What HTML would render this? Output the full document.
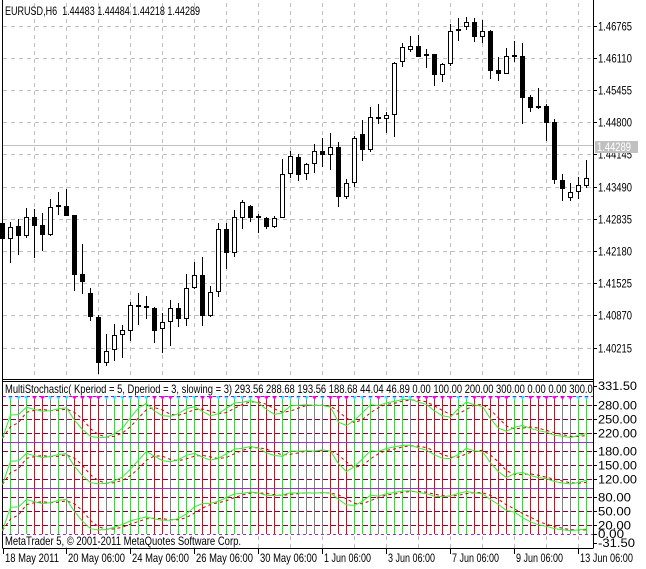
<!DOCTYPE html><html><head><meta charset="utf-8"><style>
html,body{margin:0;padding:0;background:#fff;width:646px;height:569px;overflow:hidden}
svg{display:block}
text{font-family:"Liberation Sans",sans-serif;font-size:12px;fill:#000}
</style></head><body>
<svg id="s" width="646" height="569" xmlns="http://www.w3.org/2000/svg"></svg>
<script>
var d=[[223,239,220,240],[239,227,222,263],[226,236,219,255],[236,217,208,238],[217,226,209,258],[225,235,213,251],[235,207,199,236],[207,205,192,215],[206,216,189,216],[215,275,215,291],[274,282,244,294],[293,317,288,321],[317,363,315,374],[363,351,334,366],[350,335,324,361],[335,330,325,358],[331,305,302,341],[305,306,293,325],[306,308,296,319],[308,331,307,343],[329,322,313,353],[322,308,300,346],[308,319,303,327],[319,288,274,326],[288,275,262,289],[275,316,257,326],[316,292,286,317],[292,229,223,297],[229,253,223,269],[253,217,210,257],[218,202,200,229],[206,218,205,222],[216,218,214,233],[218,227,217,229],[227,218,216,228],[218,174,159,218],[174,156,151,178],[157,175,154,181],[174,164,163,180],[164,151,144,173],[151,155,138,167],[155,147,133,170],[147,197,142,207],[197,183,179,199],[183,138,136,187],[134,150,120,161],[150,117,107,152],[117,119,104,124],[119,115,112,133],[115,63,62,137],[62,47,43,67],[50,46,36,52],[46,57,35,57],[56,54,49,68],[54,75,54,86],[75,64,63,82],[64,31,24,66],[31,29,18,41],[27,22,17,30],[22,37,18,42],[37,31,20,43],[31,71,30,79],[70,74,57,81],[74,56,48,74],[55,56,41,62],[56,98,43,124],[97,108,95,112],[106,107,88,109],[106,123,104,141],[122,180,119,184],[180,189,174,201],[198,192,183,201],[192,185,177,199],[186,178,160,188]];
var o='';
function L(x1,y1,x2,y2,c,da,w){o+='<line x1="'+x1+'" y1="'+y1+'" x2="'+x2+'" y2="'+y2+'" stroke="'+c+'"'+(da?' stroke-dasharray="'+da+'"':'')+(w?' stroke-width="'+w+'"':'')+'/>';}
function T(x,y,t,f,tl){o+='<text x="'+x+'" y="'+y+'"'+(f?' style="fill:'+f+'"':'')+(tl?' textLength="'+tl+'" lengthAdjust="spacingAndGlyphs"':'')+'>'+t+'</text>';}
var labs=['1.46765','1.46110','1.45455','1.44800','1.44145','1.43490','1.42835','1.42180','1.41525','1.40870','1.40215'];
for(var k=0;k<11;k++){var y=25.5+k*32.2;y=Math.round(y)+0.5;L(3,y,593,y,'#c0c0c0','4,4');L(593,y,597,y,'#000');T(598,y+4,labs[k],0,34);}
for(var k=0;k<18;k++){var x=34.5+32*k;L(x,3,x,379,'#c0c0c0','4,4');L(x,536,x,548,'#c0c0c0','4,4');}
L(3,145.5,593,145.5,'#c0c0c0');
for(var i=0;i<d.length;i++){var c=d[i],cx=8*i+2.5,op=c[0],cl=c[1],h=c[2],l=c[3];var t=Math.min(op,cl),b=Math.max(op,cl);
L(cx,h,cx,l,'#000');
if(b-t<2){o+='<rect x="'+(8*i)+'" y="'+t+'" width="5" height="2" fill="#000"/>';}
else if(cl>op){o+='<rect x="'+(8*i)+'" y="'+t+'" width="5" height="'+(b-t)+'" fill="#000"/>';}
else{o+='<rect x="'+(8*i+.5)+'" y="'+(t+.5)+'" width="4" height="'+(b-t-1)+'" fill="#fff" stroke="#000"/>';}}
o+='<rect x="595" y="141" width="43" height="12" fill="#c0c0c0"/>';T(597,151,'1.44289','#fff',34);
T(5,15,'EURUSD,H6&#160; 1.44483 1.44484 1.44218 1.44289',0,195);
L(2.5,0,2.5,548,'#000');L(2.5,379.5,593.5,379.5,'#000');L(2.5,381.5,593.5,381.5,'#000');L(2.5,548.5,593.5,548.5,'#000');L(593.5,0,593.5,548,'#000');
function stoch(p){var K=[],hh=[],ll=[];for(var i=0;i<d.length;i++){var H=-1e9,Lo=1e9;for(var j=Math.max(0,i-p+1);j<=i;j++){H=Math.max(H,-d[j][2]);Lo=Math.min(Lo,-d[j][3]);}hh.push(H-Lo);ll.push(-d[i][1]-Lo);}
for(var i=0;i<d.length;i++){var a=0,b=0;for(var j=Math.max(0,i-2);j<=i;j++){a+=ll[j];b+=hh[j];}K.push(b?100*a/b:50);}
var D=[];for(var i=0;i<d.length;i++){var s=0,n=0;for(var j=Math.max(0,i-2);j<=i;j++){s+=K[j];n++;}D.push(s/n);}return [K,D];}
function Y(v){return 534.2-v*0.4615;}
var S1=stoch(5),S2=stoch(6),S3=stoch(14);
for(var i=1;i<d.length;i++){var cx=8*i+2.5,dk=S1[0][i]-S1[0][i-1];var col=Math.abs(dk)<3?'#808080':(dk>0?'#00ff00':'#ff0000');var m=dk>0?'#00ffff':'#ff00ff';
L(cx,398,cx,534,col);o+='<polygon points="'+(cx-2.5)+',396 '+(cx+2.5)+',396 '+cx+',400" fill="'+m+'"/>';}
[280,250,220,180,150,120,80,50,20].forEach(function(v){var y=Math.round(Y(v))+.5;L(3,y,593,y,'#800040','5,3');L(593,y,597,y,'#000');T(598,y+4,v+'.00',0,v>=100?39:33);});
[200,100].forEach(function(v){var y=Math.round(Y(v))+.5;L(3,y,593,y,'#9933cc');});
L(3,396.5,593,396.5,'#cc00cc','3,3');L(3,534.5,593,534.5,'#9933cc','3,3');L(593,534.5,597,534.5,'#000');
T(598,538,'0.00',0,26);T(598,390,'331.50',0,39);T(598,547,'-31.50',0,37);L(593,386.5,597,386.5,'#000');L(593,543.5,597,543.5,'#000');
function line(arr,off,col,da){var p=[];for(var i=0;i<arr.length;i++)p.push((8*i+2.5)+','+Y(off+arr[i]*0.94+3).toFixed(1));o+='<polyline points="'+p.join(' ')+'" fill="none" stroke="'+col+'"'+(da?' stroke-dasharray="'+da+'"':'')+'/>';}
[[S1,200],[S2,100],[S3,0]].forEach(function(a){line(a[0][1],a[1],'#cc0000','3,3');line(a[0][0],a[1],'#33ee33');});
o+='<clipPath id="cp"><rect x="3" y="382" width="590" height="14"/></clipPath>';
o+='<g clip-path="url(#cp)"><rect x="4" y="382" width="590" height="13" fill="#fff"/>';
o+='<text x="5" y="393" textLength="593" lengthAdjust="spacingAndGlyphs">MultiStochastic( Kperiod = 5, Dperiod = 3, slowing = 3) 293.56 288.68 193.56 188.68 44.04 46.89 0.00 100.00 200.00 300.00 0.00 0.00 300.00</text></g>';
o+='<rect x="4" y="536" width="240" height="11" fill="#fff"/>';
T(5,545,'MetaTrader 5, &#169; 2001-2011 MetaQuotes Software Corp.',0,236);
var dl=[[3,'18 May 2011',54],[66,'20 May 06:00',57],[130,'24 May 06:00',57],[194,'26 May 06:00',57],[258,'30 May 06:00',57],[322,'1 Jun 06:00',47],[386,'3 Jun 06:00',47],[450,'7 Jun 06:00',47],[514,'9 Jun 06:00',47],[578,'13 Jun 06:00',53]];
dl.forEach(function(a){L(a[0]+.5,549,a[0]+.5,554,'#000');T(a[0]+2,562,a[1],0,a[2]);});
document.getElementById('s').innerHTML=o;
</script>
</body></html>
